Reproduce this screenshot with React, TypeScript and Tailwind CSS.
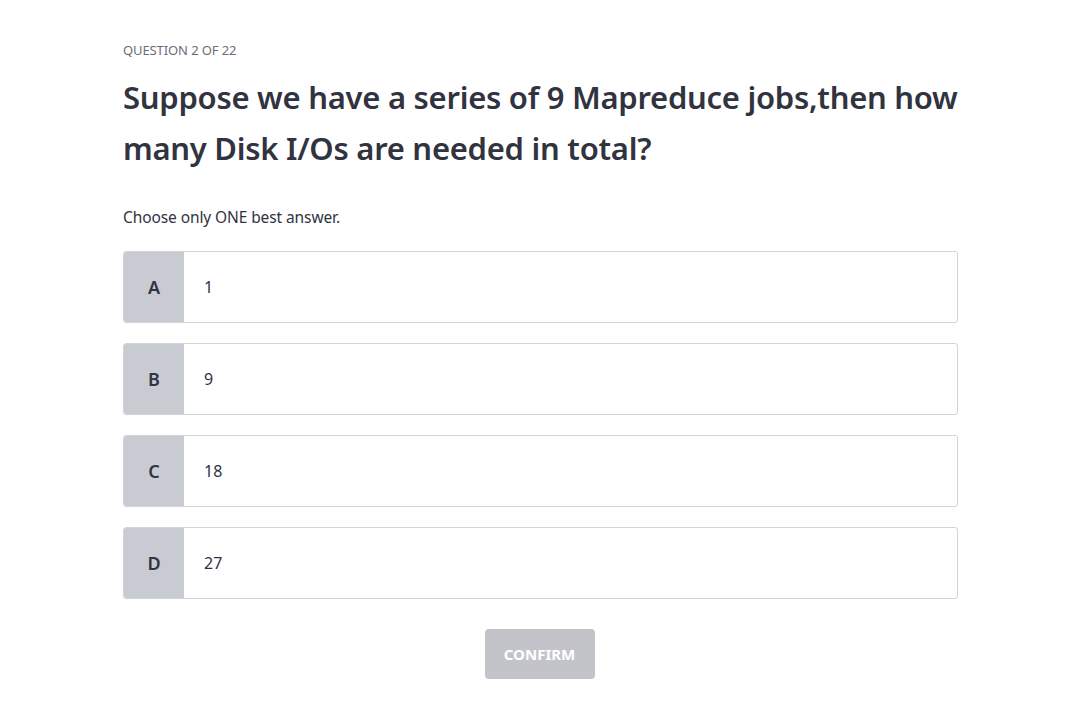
export default function App() {
  const options = [
    { letter: "A", text: "1" },
    { letter: "B", text: "9" },
    { letter: "C", text: "18" },
    { letter: "D", text: "27" },
  ]

  return (
    <div
      className="min-h-[716px] bg-white text-[#31333f]"
      style={{ fontFamily: '"Noto Sans", "Open Sans", sans-serif' }}
    >
      <div className="ml-[123px] w-[835px] pt-[41px]">
        <div className="text-[13px] leading-[18px] tracking-[-0.1px] text-[#6b6d7a]">QUESTION 2 OF 22</div>

        <h1 className="mt-[13px] text-[31px] font-semibold leading-[51px] tracking-[-0.27px] text-[#31333f]">
          Suppose we have a series of 9 Mapreduce jobs,then how many Disk I/Os are needed in total?
        </h1>

        <p className="mt-[32px] text-[15.5px] leading-[22px] tracking-[-0.1px] text-[#31333f]">Choose only ONE best answer.</p>

        {/* answer options */}
        <div className="mt-[23px] flex flex-col gap-[20px]">
          {options.map((opt) => (
            <div
              key={opt.letter}
              className="flex h-[72px] overflow-hidden rounded-[3px] border border-[#d3d4da] bg-white"
            >
              <div className="flex w-[60px] items-center justify-center bg-[#c9cbd3] text-[18px] font-semibold text-[#31333f]">
                {opt.letter}
              </div>
              <div className="flex items-center pl-[20px] text-[16px] text-[#31333f]">{opt.text}</div>
            </div>
          ))}
        </div>

        <div className="mt-[30px] flex justify-center pr-[2px]">
          <button className="h-[50px] w-[110px] rounded-[4px] bg-[#c3c4ca] text-[15px] font-bold text-white">
            CONFIRM
          </button>
        </div>
      </div>
    </div>
  )
}
